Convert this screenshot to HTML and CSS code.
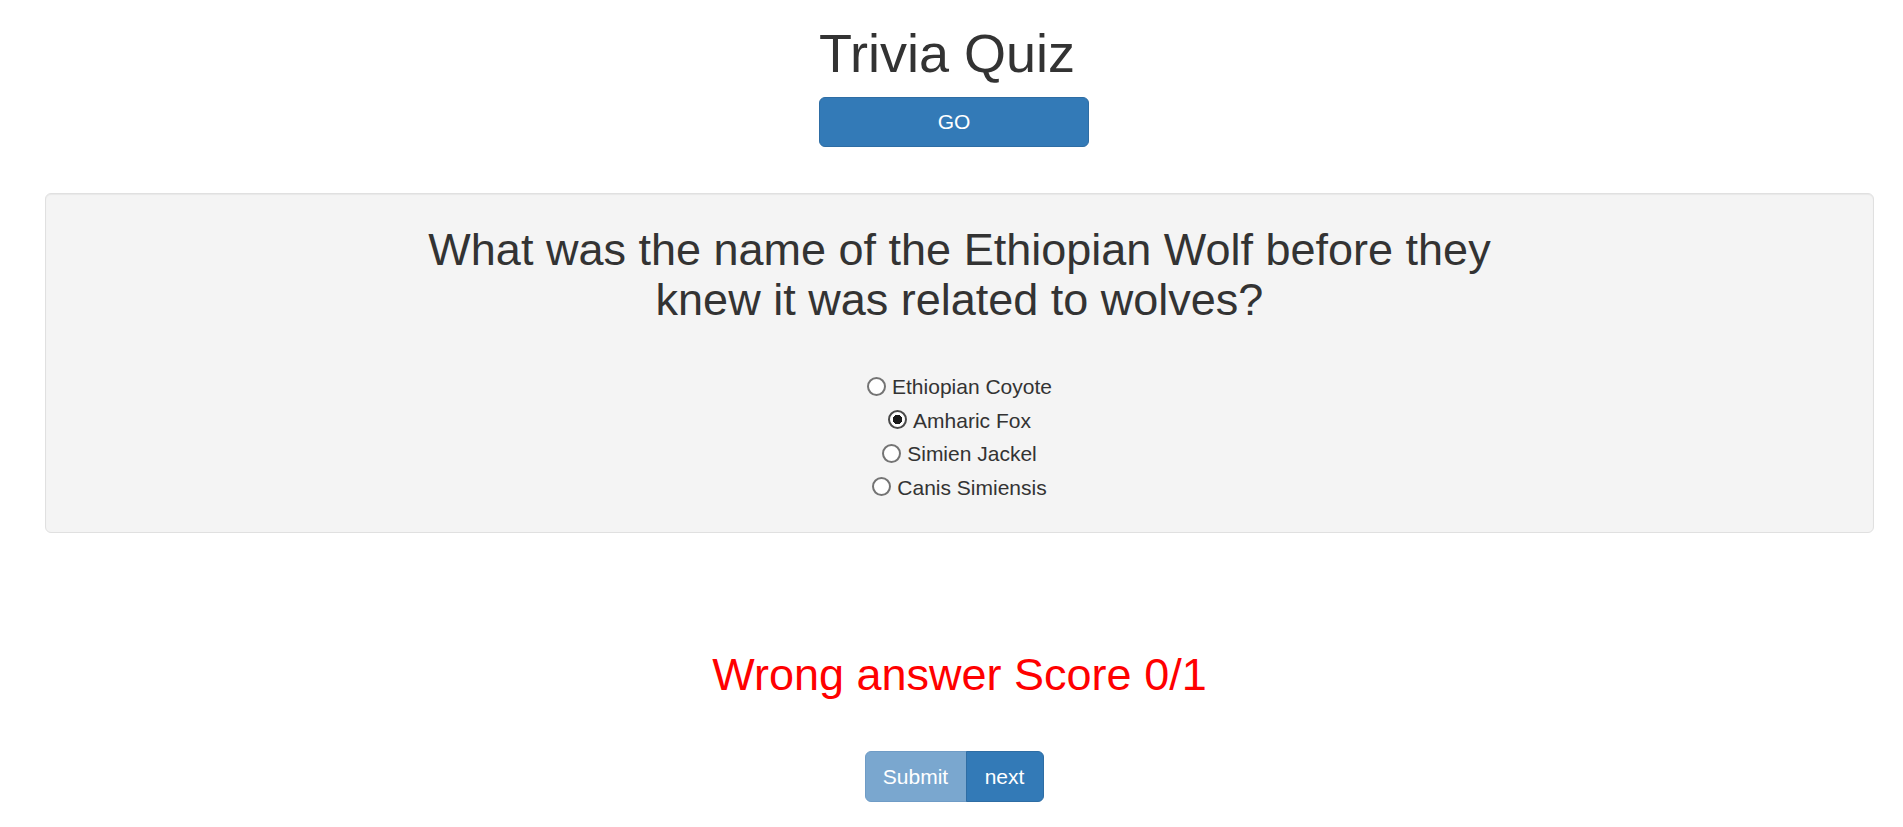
FILE: index.html
```html
<!DOCTYPE html>
<html lang="en">
<head>
<meta charset="utf-8">
<title>Trivia Quiz</title>
<link rel="stylesheet" href="styles.css">
</head>
<body>
  <header class="header">
    <h1 class="title">Trivia Quiz</h1>
    <button class="btn btn-go" type="button">GO</button>
  </header>

  <main class="content">
    <section class="well">
      <h2 class="question">What was the name of the Ethiopian Wolf before they knew it was related to wolves?</h2>
      <form class="answers">
        <label class="answer"><input type="radio" name="a" class="radio"><span>Ethiopian Coyote</span></label>
        <label class="answer"><input type="radio" name="a" class="radio" checked><span>Amharic Fox</span></label>
        <label class="answer"><input type="radio" name="a" class="radio"><span>Simien Jackel</span></label>
        <label class="answer"><input type="radio" name="a" class="radio"><span>Canis Simiensis</span></label>
      </form>
    </section>

    <h2 class="result">Wrong answer Score 0/1</h2>
  </main>

  <div class="actions">
    <div class="btn-group">
      <button class="btn btn-submit" type="button" disabled>Submit</button>
      <button class="btn btn-next" type="button">next</button>
    </div>
  </div>
</body>
</html>
```

FILE: styles.css
```css
html, body {
  margin: 0;
  padding: 0;
  background: #ffffff;
}

body {
  font-family: "Liberation Sans", Arial, Helvetica, sans-serif;
  color: #333333;
  font-size: 21px;
  line-height: 1.42857;
}

.header {
  width: 270px;
  margin-left: 819px;
  padding-top: 24px;
  display: flex;
  flex-direction: column;
  align-items: flex-start;
}

.title {
  margin: 0;
  font-size: 54px;
  font-weight: 500;
  line-height: 1.1;
  color: #333333;
  white-space: nowrap;
}

.btn {
  font-family: "Liberation Sans", Arial, Helvetica, sans-serif;
  font-size: 21px;
  line-height: 30px;
  padding: 9px 18px;
  color: #ffffff;
  border: 1px solid #2e6da4;
  background: #337ab7;
  cursor: pointer;
}

.btn-go {
  margin-top: 14px;
  width: 270px;
  height: 50px;
  border-radius: 6px;
  padding: 0;
}

.content {
  padding: 46px 29px 0 45px;
}

.well {
  background: #f4f4f4;
  border: 1px solid #e0e0e0;
  border-radius: 6px;
  box-shadow: inset 0 1px 1px rgba(0, 0, 0, 0.05);
  padding: 31px 28px 28px;
  display: flex;
  flex-direction: column;
  align-items: center;
}

.question {
  margin: 0;
  max-width: 1110px;
  font-size: 45px;
  font-weight: 500;
  line-height: 1.1;
  text-align: center;
  color: #333333;
}

.answers {
  margin-top: 46px;
  display: flex;
  flex-direction: column;
  align-items: center;
}

.answer {
  display: flex;
  align-items: center;
  height: 33.4px;
  line-height: 33.4px;
  font-size: 21px;
  color: #333333;
}

.radio {
  appearance: none;
  -webkit-appearance: none;
  width: 19px;
  height: 19px;
  margin: 0 6px 1px 0;
  border: 2px solid #747474;
  border-radius: 50%;
  background: #ffffff;
  box-sizing: border-box;
}

.radio:checked {
  border-color: #4a4a4a;
  background: radial-gradient(circle, #1a1a1a 0 4.5px, #ffffff 5px);
}

.result {
  margin: 117px 0 0;
  font-size: 45px;
  font-weight: 500;
  line-height: 1.1;
  text-align: center;
  color: #ff0000;
}

.actions {
  display: flex;
  justify-content: center;
  padding: 52px 0 0 5px;
}

.btn-group {
  display: flex;
}

.btn-submit {
  width: 102px;
  height: 51px;
  padding: 0;
  border-radius: 6px 0 0 6px;
  background: #7aa7cf;
  border-color: #6f9cc6;
  cursor: not-allowed;
}

.btn-next {
  width: 78px;
  height: 51px;
  padding: 0;
  border-radius: 0 6px 6px 0;
  margin-left: -1px;
}
```
